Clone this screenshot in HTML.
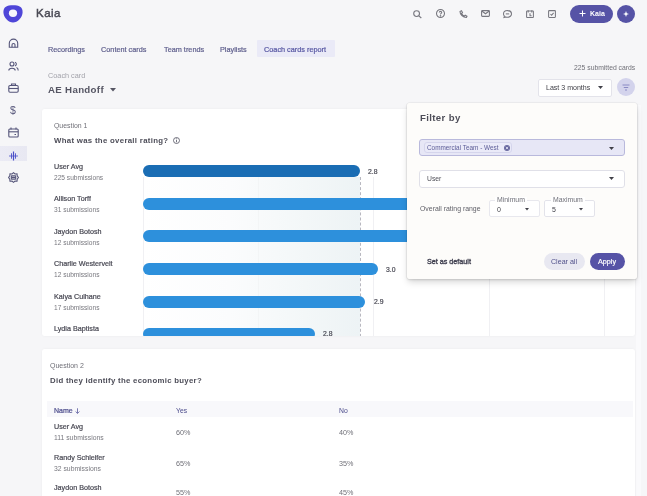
<!DOCTYPE html>
<html><head><meta charset="utf-8">
<style>
*{box-sizing:border-box;margin:0;padding:0}
html,body{width:647px;height:496px;overflow:hidden;background:#f6f6f8;font-family:"Liberation Sans",sans-serif;position:relative}
.a{position:absolute;white-space:nowrap;line-height:1;will-change:transform}
.b{font-weight:bold}
.m{-webkit-text-stroke:0.2px currentColor}
svg{position:absolute;overflow:visible}
</style></head><body>

<!-- logo -->
<svg style="left:2.7px;top:5px" width="20" height="18" viewBox="0 0 20 18">
  <path d="M10 0.3 C16 0.3 19.6 1.8 19.6 7 C19.6 12.5 14.5 17.6 10 17.6 C5.5 17.6 0.4 12.5 0.4 7 C0.4 1.8 4 0.3 10 0.3 Z" fill="#4f46d8"/>
  <ellipse cx="10" cy="8.3" rx="4.1" ry="3.7" fill="#f7f7fb"/>
</svg>
<div class="a" style="left:36px;top:8px;font-size:11.5px;letter-spacing:0.5px;-webkit-text-stroke:0.45px #4a4a55;color:#4a4a55">Kaia</div>

<!-- sidebar icons -->
<svg style="left:8px;top:38px" width="11" height="11" viewBox="0 0 11 11" fill="none" stroke="#55557a" stroke-width="1.1">
  <path d="M1.3 9.2 V5.3 C1.3 3 3.2 1.1 5.5 1.1 C7.8 1.1 9.7 3 9.7 5.3 V9.2 Z"/><path d="M4 9.2 V7 A1.5 1.5 0 0 1 7 7 V9.2"/>
</svg>
<svg style="left:8px;top:60.5px" width="11" height="10" viewBox="0 0 11 10" fill="none" stroke="#55557a" stroke-width="1.1">
  <circle cx="4" cy="3" r="2"/><path d="M0.8 9.5 C0.8 6.5 7.2 6.5 7.2 9.5"/><path d="M7 1.2 A2 2 0 0 1 7 5"/><path d="M8.5 6.5 C10 7 10.2 8 10.2 9.5"/>
</svg>
<svg style="left:8px;top:83px" width="11" height="10" viewBox="0 0 11 10" fill="none" stroke="#55557a" stroke-width="1.1">
  <rect x="0.8" y="2.5" width="9.4" height="6.8" rx="1.2"/><path d="M3.5 2.5 V1 H7.5 V2.5"/><path d="M0.8 5.5 H10.2"/>
</svg>
<div class="a" style="left:10px;top:105px;font-size:10.5px;color:#55557a">$</div>
<svg style="left:8px;top:127px" width="11" height="11" viewBox="0 0 11 11" fill="none" stroke="#55557a" stroke-width="1.1">
  <rect x="0.8" y="2" width="9.4" height="8" rx="1"/><path d="M0.8 4.8 H10.2"/><path d="M3 0.5 V2.5 M8 0.5 V2.5"/><path d="M6.5 7.5 H8"/>
</svg>
<div class="a" style="left:0;top:146px;width:27px;height:14.6px;background:linear-gradient(90deg,#ebebf5,#e8e8f2)"></div>
<svg style="left:7.5px;top:149.5px" width="11" height="11" viewBox="0 0 11 10" fill="none" stroke="#4a4ec8">
  <path d="M1 5.5 H10" stroke-width="0.8"/><path d="M5.5 1 V10" stroke-width="1.2"/><path d="M3.5 2.8 V8.2 M7.5 2.8 V8.2" stroke-width="0.9"/>
</svg>
<svg style="left:8px;top:171.5px" width="11" height="11" viewBox="0 0 11 11" fill="none" stroke="#55557a" stroke-width="1.1">
  <path d="M5.5 0.7 L7 2 L9 1.8 L9.2 3.8 L10.4 5.5 L9.2 7.2 L9 9.2 L7 9 L5.5 10.3 L4 9 L2 9.2 L1.8 7.2 L0.6 5.5 L1.8 3.8 L2 1.8 L4 2 Z"/><rect x="3.3" y="3.9" width="4.4" height="3.2" rx="0.4"/><path d="M3.3 5.5 H7.7"/>
</svg>

<!-- top icons -->
<svg style="left:413px;top:10px" width="9" height="8" viewBox="0 0 9 8" fill="none" stroke="#77777f" stroke-width="1.1">
  <circle cx="3.6" cy="3.6" r="2.9"/><path d="M5.8 5.8 L8.3 8"/>
</svg>
<svg style="left:436px;top:8.8px" width="9" height="9" viewBox="0 0 9 9" fill="none" stroke="#77777f" stroke-width="1.05">
  <circle cx="4.5" cy="4.5" r="4"/><path d="M3.3 3.4 C3.3 2 5.7 2 5.7 3.4 C5.7 4.4 4.5 4.4 4.5 5.5"/><circle cx="4.5" cy="6.9" r="0.3" fill="#77777f"/>
</svg>
<svg style="left:459px;top:10px" width="9" height="8" viewBox="0 0 9 8" fill="none" stroke="#77777f" stroke-width="1.1">
  <path d="M1 1.5 L2.5 0.8 L3.5 2.6 L2.6 3.4 C3.2 4.6 4.2 5.6 5.4 6.1 L6.2 5.2 L8 6.2 L7.4 7.5 C4 7.5 1 4.5 1 1.5 Z"/>
</svg>
<svg style="left:481px;top:10px" width="9" height="7" viewBox="0 0 9 7" fill="none" stroke="#77777f" stroke-width="1.1">
  <rect x="0.6" y="0.6" width="7.8" height="5.8" rx="0.8"/><path d="M0.8 1 L4.5 3.8 L8.2 1"/>
</svg>
<svg style="left:503px;top:10px" width="9" height="8" viewBox="0 0 9 8" fill="none" stroke="#77777f" stroke-width="1.05">
  <path d="M4.5 0.6 C6.8 0.6 8.5 2 8.5 3.9 C8.5 5.8 6.8 7.2 4.5 7.2 C3.9 7.2 3.3 7.1 2.8 6.9 L1 7.4 L1.4 6 C0.8 5.4 0.5 4.7 0.5 3.9 C0.5 2 2.2 0.6 4.5 0.6 Z"/><path d="M2.8 3.9 H6.2"/>
</svg>
<svg style="left:526px;top:9.5px" width="8" height="8" viewBox="0 0 8 8" fill="none" stroke="#77777f" stroke-width="1.05">
  <rect x="0.6" y="1" width="6.8" height="6.5" rx="0.6"/><path d="M2.2 0.3 V2.5 M5.8 0.3 V2.5"/><path d="M4 3.2 V5.8 L5.6 5.8"/>
</svg>
<svg style="left:548px;top:10px" width="8" height="8" viewBox="0 0 8 8" fill="none" stroke="#77777f" stroke-width="1.05">
  <rect x="0.6" y="0.6" width="6.8" height="6.8" rx="0.6"/><path d="M2.5 4.2 L3.6 5.3 L5.6 2.8"/>
</svg>

<div class="a" style="left:570px;top:5px;width:43px;height:18px;border-radius:9px;background:#5653a6"></div>
<svg style="left:579px;top:10px" width="7" height="7" viewBox="0 0 7 7" stroke="#fff" stroke-width="1"><path d="M3.5 0.5 V6.5 M0.5 3.5 H6.5"/></svg>
<div class="a b" style="left:590px;top:10px;font-size:7px;color:#fff">Kaia</div>
<div class="a" style="left:617px;top:5px;width:18px;height:18px;border-radius:9px;background:#5653a6"></div>
<svg style="left:623px;top:11px" width="6" height="6" viewBox="0 0 6 6"><path d="M3 0 L3.8 2.2 L6 3 L3.8 3.8 L3 6 L2.2 3.8 L0 3 L2.2 2.2 Z" fill="#fff"/></svg>

<!-- tabs -->
<div class="a" style="left:257px;top:39.6px;width:77.5px;height:16.8px;border-radius:1px;background:#eaeaf7"></div>
<div class="a m" style="left:48px;top:45.5px;font-size:7.3px;color:#5e5e8c">Recordings</div>
<div class="a m" style="left:101px;top:45.5px;font-size:7.3px;color:#5e5e8c">Content cards</div>
<div class="a m" style="left:164px;top:45.5px;font-size:7.3px;color:#5e5e8c">Team trends</div>
<div class="a m" style="left:220px;top:45.5px;font-size:7.3px;color:#5e5e8c">Playlists</div>
<div class="a m" style="left:264px;top:45.5px;font-size:7.3px;color:#5656a2">Coach cards report</div>

<div class="a" style="left:48px;top:71.5px;font-size:7.3px;color:#a3a3ab">Coach card</div>
<div class="a b" style="left:48px;top:85px;font-size:9.7px;letter-spacing:0.32px;color:#555563">AE Handoff</div>
<svg style="left:110px;top:87.8px" width="6" height="3.5" viewBox="0 0 6 3.5"><path d="M0 0 H6 L3 3.5 Z" fill="#555563"/></svg>

<div class="a" style="left:574px;top:64.7px;font-size:6.8px;color:#707078">225 submitted cards</div>
<div class="a" style="left:538px;top:78.5px;width:73.5px;height:17.5px;background:#fff;border:1px solid #e3e3ea;border-radius:2px"></div>
<div class="a" style="left:546px;top:83.8px;font-size:7.05px;color:#404048">Last 3 months</div>
<svg style="left:597.5px;top:86px" width="5" height="3" viewBox="0 0 5 3"><path d="M0 0 H5 L2.5 3 Z" fill="#404048"/></svg>
<div class="a" style="left:616.5px;top:78px;width:18px;height:18px;border-radius:9px;background:#d3d3ec"></div>
<svg style="left:621.5px;top:83.5px" width="8" height="7" viewBox="0 0 8 7" fill="none" stroke="#8a8ac4" stroke-width="1"><path d="M0.5 1 H7.5 M1.8 3.5 H6.2 M3 6 H5"/></svg>

<div class="a" style="left:635.5px;top:105px;width:4.5px;height:391px;background:#fafafc"></div>
<!-- card 1 -->
<div class="a" style="left:42px;top:109px;width:593px;height:227px;background:#fff;border-radius:3px;box-shadow:0 0 3px rgba(0,0,0,0.05)" id="card1">
</div>
<div class="a" style="left:54px;top:122.5px;font-size:6.9px;color:#707078">Question 1</div>
<div class="a b" style="left:54px;top:137px;font-size:7.8px;letter-spacing:0.31px;color:#4d4d58">What was the overall rating?</div>
<svg style="left:172.5px;top:136.5px" width="7" height="7" viewBox="0 0 7 7" fill="none" stroke="#505060" stroke-width="0.8"><circle cx="3.5" cy="3.5" r="3"/><path d="M3.5 3 V5.3"/><circle cx="3.5" cy="1.9" r="0.2"/></svg>

<!-- chart -->
<div class="a" style="left:42px;top:109px;width:593px;height:227px;overflow:hidden">
  <!-- avg region -->
  <div class="a" style="left:101px;top:68px;width:217px;height:170px;background:linear-gradient(90deg,#ffffff 0%,#fbfcfd 40%,#f3f7f8 75%,#edf3f5 100%)"></div>
  <div class="a" style="left:101px;top:68px;width:1px;height:170px;background:#f0f0f3"></div>
  <div class="a" style="left:216px;top:68px;width:1px;height:170px;background:rgba(0,0,0,0.018)"></div>
  <div class="a" style="left:331px;top:68px;width:1px;height:170px;background:#f0f0f3"></div>
  <div class="a" style="left:447px;top:68px;width:1px;height:170px;background:#f0f0f3"></div>
  <div class="a" style="left:562px;top:68px;width:1px;height:170px;background:#f0f0f3"></div>
  <div class="a" style="left:317.5px;top:68px;width:0;height:170px;border-left:1px dashed #b8b8c0"></div>

  <div class="a" style="left:101px;top:56px;width:217px;height:11.5px;border-radius:6px;background:#1a6db4"></div>
  <div class="a" style="left:101px;top:89px;width:300px;height:11.5px;border-radius:6px;background:#2d90dc"></div>
  <div class="a" style="left:101px;top:121px;width:300px;height:11.5px;border-radius:6px;background:#2d90dc"></div>
  <div class="a" style="left:101px;top:154px;width:235px;height:11.5px;border-radius:6px;background:#2d90dc"></div>
  <div class="a" style="left:101px;top:186.5px;width:222px;height:11.5px;border-radius:6px;background:#2d90dc"></div>
  <div class="a" style="left:101px;top:219px;width:172px;height:11.5px;border-radius:6px;background:#2d90dc"></div>

  <div class="a m" style="left:326px;top:60px;font-size:6.8px;color:#4a4a55">2.8</div>
  <div class="a m" style="left:344px;top:157.5px;font-size:6.8px;color:#4a4a55">3.0</div>
  <div class="a m" style="left:331.5px;top:190px;font-size:6.8px;color:#4a4a55">2.9</div>
  <div class="a m" style="left:280.5px;top:221.5px;font-size:6.8px;color:#4a4a55">2.8</div>

  <div class="a m" style="left:12px;top:54.4px;font-size:7.2px;color:#474752">User Avg</div>
  <div class="a" style="left:12px;top:66px;font-size:6.6px;color:#78787f">225 submissions</div>
  <div class="a m" style="left:12px;top:86.4px;font-size:7.2px;color:#474752">Allison Torff</div>
  <div class="a" style="left:12px;top:98px;font-size:6.6px;color:#78787f">31 submissions</div>
  <div class="a m" style="left:12px;top:118.9px;font-size:7.2px;color:#474752">Jaydon Botosh</div>
  <div class="a" style="left:12px;top:130.5px;font-size:6.6px;color:#78787f">12 submissions</div>
  <div class="a m" style="left:12px;top:151.4px;font-size:7.2px;color:#474752">Charlie Westervelt</div>
  <div class="a" style="left:12px;top:163px;font-size:6.6px;color:#78787f">12 submissions</div>
  <div class="a m" style="left:12px;top:183.9px;font-size:7.2px;color:#474752">Kaiya Culhane</div>
  <div class="a" style="left:12px;top:195.5px;font-size:6.6px;color:#78787f">17 submissions</div>
  <div class="a m" style="left:12px;top:216.4px;font-size:7.2px;color:#474752">Lydia Baptista</div>
</div>

<!-- card 2 -->
<div class="a" style="left:42px;top:349px;width:593px;height:160px;background:#fff;border-radius:3px;box-shadow:0 0 3px rgba(0,0,0,0.05)"></div>
<div class="a" style="left:50px;top:361.5px;font-size:7px;color:#707078">Question 2</div>
<div class="a b" style="left:50px;top:377.3px;font-size:7.8px;letter-spacing:0.29px;color:#4d4d58">Did they identify the economic buyer?</div>
<div class="a" style="left:47px;top:401px;width:586px;height:15.8px;background:#f8f8fb"></div>
<div class="a m" style="left:54px;top:407.3px;font-size:7px;color:#4a4a8a">Name</div>
<svg style="left:74.5px;top:407.5px" width="5" height="6" viewBox="0 0 5 6" fill="none" stroke="#6a6aa6" stroke-width="0.9"><path d="M2.5 0.3 V5.4 M0.6 3.5 L2.5 5.4 L4.4 3.5"/></svg>
<div class="a" style="left:176px;top:407.5px;font-size:6.8px;color:#4a4a8a">Yes</div>
<div class="a" style="left:339px;top:407.5px;font-size:6.8px;color:#4a4a8a">No</div>

<div class="a m" style="left:54px;top:423.4px;font-size:7.2px;color:#474752">User Avg</div>
<div class="a" style="left:54px;top:434.8px;font-size:6.8px;color:#78787f">111 submissions</div>
<div class="a" style="left:176px;top:428.5px;font-size:7.2px;color:#707078">60%</div>
<div class="a" style="left:339px;top:428.5px;font-size:7.2px;color:#707078">40%</div>
<div class="a m" style="left:54px;top:454.1px;font-size:7.2px;color:#474752">Randy Schleifer</div>
<div class="a" style="left:54px;top:465.5px;font-size:6.8px;color:#78787f">32 submissions</div>
<div class="a" style="left:176px;top:459.5px;font-size:7.2px;color:#707078">65%</div>
<div class="a" style="left:339px;top:459.5px;font-size:7.2px;color:#707078">35%</div>
<div class="a m" style="left:54px;top:484.1px;font-size:7.2px;color:#474752">Jaydon Botosh</div>
<div class="a" style="left:176px;top:488.5px;font-size:7.2px;color:#707078">55%</div>
<div class="a" style="left:339px;top:488.5px;font-size:7.2px;color:#707078">45%</div>

<!-- popover -->
<div class="a" style="left:406.5px;top:102.5px;width:230px;height:175.7px;background:#fdfcfa;border-radius:2px;box-shadow:0 4px 7px -1px rgba(0,0,0,0.16),0 0 0 0.6px rgba(0,0,0,0.07),0 1px 3px rgba(0,0,0,0.1)"></div>
<div class="a b" style="left:420px;top:112.8px;font-size:9.6px;letter-spacing:0.37px;color:#4d4d58">Filter by</div>
<div class="a" style="left:419px;top:139px;width:205.5px;height:17px;background:#e7e7f6;border:1px solid #b9b9dc;border-radius:3px"></div>
<div class="a" style="left:424px;top:141.7px;width:88px;height:11px;background:#eaeaf8;border:1px solid #d5d5ec;border-radius:3px"></div>
<div class="a" style="left:427px;top:145px;font-size:6.4px;color:#5d5d98">Commercial Team - West</div>
<svg style="left:504px;top:144.5px" width="6" height="6" viewBox="0 0 6 6"><circle cx="3" cy="3" r="3" fill="#6a6aa0"/><path d="M1.8 1.8 L4.2 4.2 M4.2 1.8 L1.8 4.2" stroke="#e6e6f7" stroke-width="0.8"/></svg>
<svg style="left:609px;top:146.5px" width="5" height="3" viewBox="0 0 5 3"><path d="M0 0 H5 L2.5 3 Z" fill="#404048"/></svg>

<div class="a" style="left:419px;top:169.5px;width:205.5px;height:18px;background:#fff;border:1px solid #e0e0e8;border-radius:3px"></div>
<div class="a" style="left:427px;top:175.8px;font-size:6.8px;color:#505058">User</div>
<svg style="left:609px;top:177px" width="5" height="3" viewBox="0 0 5 3"><path d="M0 0 H5 L2.5 3 Z" fill="#404048"/></svg>

<div class="a" style="left:419.5px;top:205.8px;font-size:6.9px;color:#606068">Overall rating range</div>
<div class="a" style="left:488.5px;top:200px;width:50.5px;height:17px;background:#fff;border:1px solid #e8e8ee;border-radius:2px"></div>
<div class="a" style="left:495px;top:197px;padding:0 2px;font-size:6.9px;color:#707078;background:#fff">Minimum</div>
<div class="a" style="left:497px;top:205.7px;font-size:7px;color:#404048">0</div>
<svg style="left:525px;top:207.5px" width="4" height="2.5" viewBox="0 0 4 2.5"><path d="M0 0 H4 L2 2.5 Z" fill="#404048"/></svg>
<div class="a" style="left:543.5px;top:200px;width:50.5px;height:17px;background:#fff;border:1px solid #e3e3ea;border-radius:2px"></div>
<div class="a" style="left:550.5px;top:197px;padding:0 2px;font-size:6.9px;color:#707078;background:#fff">Maximum</div>
<div class="a" style="left:552px;top:205.7px;font-size:7px;color:#404048">5</div>
<svg style="left:579px;top:207.5px" width="4" height="2.5" viewBox="0 0 4 2.5"><path d="M0 0 H4 L2 2.5 Z" fill="#404048"/></svg>

<div class="a m" style="left:427px;top:258px;font-size:7.2px;-webkit-text-stroke:0.35px #404050;color:#404050">Set as default</div>
<div class="a" style="left:543.5px;top:253px;width:41px;height:17px;border-radius:8.5px;background:#e8e8f1"></div>
<div class="a" style="left:551px;top:259px;font-size:7.1px;color:#50508a">Clear all</div>
<div class="a" style="left:590px;top:253px;width:34.5px;height:17px;border-radius:8.5px;background:#5653a6"></div>
<div class="a m" style="left:598px;top:258.3px;font-size:7.2px;color:#fff">Apply</div>

</body></html>
